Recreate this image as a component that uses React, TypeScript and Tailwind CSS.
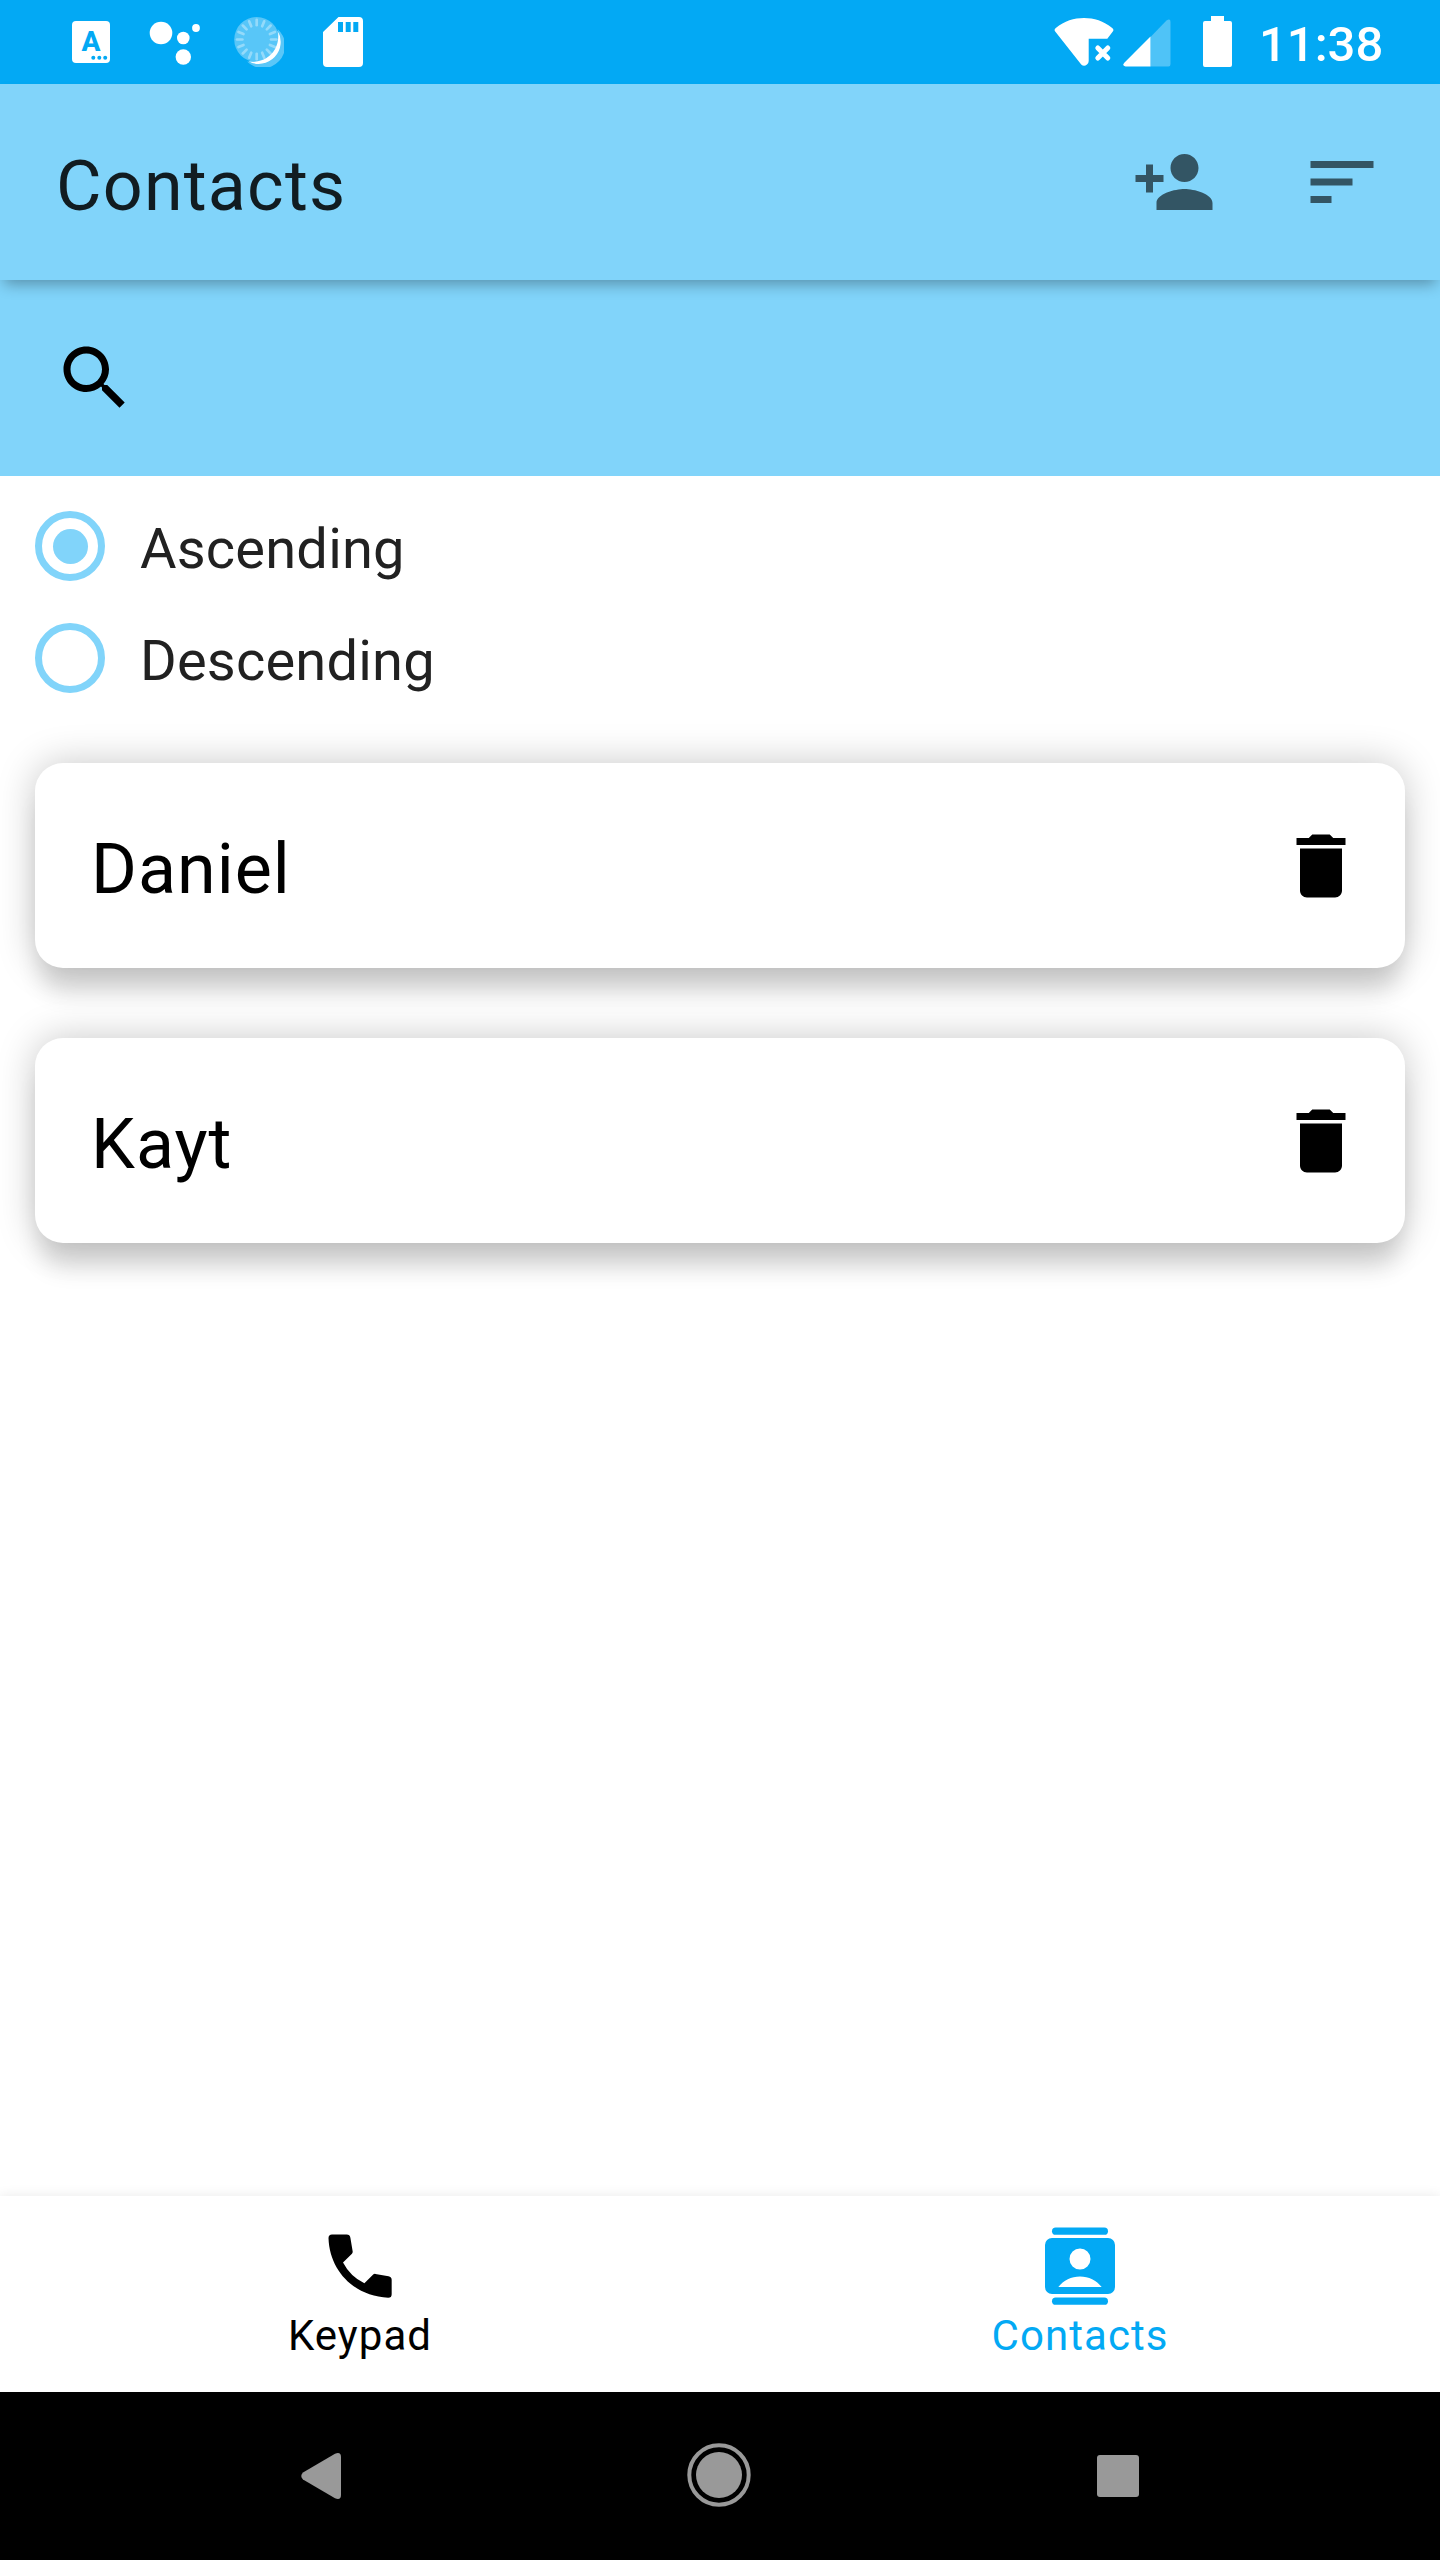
import React from "react";

type IconProps = { className?: string };

const MaterialIcon = ({ d, className = "" }: { d: string; className?: string }) => (
  <svg viewBox="0 0 24 24" className={`h-[84px] w-[84px] shrink-0 fill-current ${className}`}>
    <path d={d} />
  </svg>
);

const paths = {
  personAdd:
    "M15 12c2.21 0 4-1.79 4-4s-1.79-4-4-4-4 1.79-4 4 1.79 4 4 4zm-9-2V7H4v3H1v2h3v3h2v-3h3v-2H6zm9 4c-2.67 0-8 1.34-8 4v2h16v-2c0-2.66-5.33-4-8-4z",
  sort: "M3 18h6v-2H3v2zM3 6v2h18V6H3zm0 7h12v-2H3v2z",
  search:
    "M15.5 14h-.79l-.28-.27C15.41 12.59 16 11.11 16 9.5 16 5.91 13.09 3 9.5 3S3 5.91 3 9.5 5.91 16 9.5 16c1.61 0 3.09-.59 4.23-1.57l.27.28v.79l5 4.99L20.49 19l-4.99-5zm-6 0C7.01 14 5 11.99 5 9.5S7.01 5 9.5 5 14 7.01 14 9.5 11.99 14 9.5 14z",
  trash:
    "M6 19c0 1.1.9 2 2 2h8c1.1 0 2-.9 2-2V7H6v12zM19 4h-3.5l-1-1h-5l-1 1H5v2h14V4z",
  call: "M4 3h4.2q.9 0 1.05.9l.65 3.9q.07.4-.2.7L7.15 11q2 3.9 6.1 5.95l2.45-2.45q.3-.3.7-.25l3.75.65q.9.15.9 1.05v4.1q0 1-1 1C10.5 20.6 3.3 13.6 3 4q0-1 1-1z",
};

const KeyboardIcon = () => (
  <div className="relative h-[42px] w-[38px] rounded-[4px] bg-white text-[#03a9f4]">
    <span className="absolute inset-x-0 top-[7px] text-center text-[28px] leading-[28px] font-extrabold">A</span>
    <svg viewBox="0 0 38 42" className="absolute inset-0 fill-current">
      <circle cx="21.3" cy="36.7" r="2" />
      <circle cx="27.3" cy="36.7" r="2" />
      <circle cx="33.2" cy="36.7" r="2" />
    </svg>
  </div>
);

const AssistantIcon = ({ className }: IconProps) => (
  <svg viewBox="0 0 52 44" className={`h-[44px] w-[52px] fill-white ${className}`}>
    <circle cx="12" cy="12" r="11.3" />
    <circle cx="34.3" cy="17" r="6.3" />
    <circle cx="47" cy="7" r="3.9" />
    <circle cx="34.3" cy="36" r="7.7" />
  </svg>
);

const SyncIcon = ({ className }: IconProps) => (
  <svg viewBox="0 0 50 50" className={`h-[50px] w-[50px] ${className}`}>
    <path d="M43.5 12A22.3 22.3 0 1 1 13 44.5A24.5 24.5 0 0 0 43.5 12z" fill="#fff" fillOpacity=".35" />
    <circle cx="22.7" cy="22.5" r="22.5" fill="#fff" fillOpacity=".34" />
    <path d="M43.5 13.6A21.9 21.9 0 0 1 14.3 44.2A25 25 0 0 0 43.5 13.6z" fill="#fff" />
    {Array.from({ length: 16 }, (_, i) => (
      <path
        key={i}
        d="M22.7 2.8v5.4"
        stroke="#fff"
        strokeOpacity=".36"
        strokeWidth="2.7"
        strokeLinecap="round"
        transform={`rotate(${i * 22.5} 22.7 22.5)`}
      />
    ))}
  </svg>
);

const SdCardIcon = ({ className }: IconProps) => (
  <svg viewBox="0 0 40 50" className={`h-[50px] w-[40px] ${className}`}>
    <path
      fill="#fff"
      fillRule="evenodd"
      d="M15.5 0H36a4 4 0 0 1 4 4v42a4 4 0 0 1-4 4H4a4 4 0 0 1-4-4V15zM15 5v10h5V5zM22.7 5v10h5V5zM30.3 5v10h5V5z"
    />
  </svg>
);

const WifiOffIcon = () => (
  <svg viewBox="0 0 60 50" className="h-[50px] w-[60px]">
    <path
      fill="#fff"
      d="M1.2 14.5Q-.3 12.5 1.8 10.9C10.5 4 20 1 30 1s19.5 3 28.2 9.9Q60.3 12.5 58.8 14.5L53.3 21.7H34.7V44Q34.7 46 33 47.6Q30 50 27.2 47.6z"
    />
    <path d="M43.8 31l10 10m0-10l-10 10" stroke="#fff" strokeWidth="5" strokeLinecap="round" />
  </svg>
);

const SignalIcon = ({ className }: IconProps) => (
  <svg viewBox="0 0 48 48" className={`h-[48px] w-[48px] fill-white ${className}`}>
    <path d="M27.5 18L43.5 1.5Q47.5-1 47.5 3V45Q47.5 47.5 45.5 47.5H27.5z" fillOpacity=".3" />
    <path d="M27.5 17.5V47.5H2.5Q-1.3 46.8 1.3 43.7z" />
  </svg>
);

const BatteryIcon = ({ className }: IconProps) => (
  <svg viewBox="0 0 29 51" className={`h-[51px] w-[29px] fill-white ${className}`}>
    <path d="M8 0h13v5h6a2 2 0 0 1 2 2v42a2 2 0 0 1-2 2H2a2 2 0 0 1-2-2V7a2 2 0 0 1 2-2h6z" />
  </svg>
);

const ContactsIcon = () => (
  <svg viewBox="0 0 24 24" className="h-[84px] w-[84px] fill-current">
    <rect x="4" y="1" width="16" height="2.1" rx="1.05" />
    <rect x="4" y="21" width="16" height="2.1" rx="1.05" />
    <path
      fillRule="evenodd"
      d="M4 4h16a2 2 0 0 1 2 2v12a2 2 0 0 1-2 2H4a2 2 0 0 1-2-2V6a2 2 0 0 1 2-2zM12 7a3 3 0 1 0 0 6a3 3 0 1 0 0-6zM5.8 18h12.4C16.7 16.1 14.5 15 12 15s-4.7 1.1-6.2 3z"
    />
  </svg>
);

const StatusBar = () => (
  <div className="flex h-[84px] items-start bg-[#03a9f4] text-white">
    <div className="flex items-start pl-[72px] pt-[17px]">
      <div className="pt-1">
        <KeyboardIcon />
      </div>
      <AssistantIcon className="mt-[4px] ml-[39px]" />
      <SyncIcon className="ml-[33px]" />
      <SdCardIcon className="ml-[39px]" />
    </div>
    <div className="ml-auto flex items-start pt-[17px] pr-[54px]">
      <WifiOffIcon />
      <SignalIcon className="mt-[2px] ml-[9px]" />
      <BatteryIcon className="-mt-[1px] ml-[32px]" />
      <span className="mt-[-1px] ml-[27px] w-[127px] text-[49px] leading-[57px] font-medium whitespace-nowrap">11:38</span>
    </div>
  </div>
);

const Radio = ({ label, checked }: { label: string; checked?: boolean }) => (
  <div className="flex h-[112px] items-center gap-[35px]">
    <div className="flex h-[70px] w-[70px] items-center justify-center rounded-full border-[7px] border-[#81d4fa]">
      {checked && <div className="h-[35px] w-[35px] rounded-full bg-[#81d4fa]" />}
    </div>
    <span className="pt-[6px] text-[56px] leading-[64px] tracking-[0.2px] text-[#212121]">{label}</span>
  </div>
);

const ContactCard = ({ name }: { name: string }) => (
  <div className="flex h-[205px] items-center justify-between rounded-[28px] bg-white pr-[42px] pl-[56px] shadow-[0_0_38px_rgba(0,0,0,0.22),0_30px_24px_-6px_rgba(0,0,0,0.14)]">
    <span className="pt-[7px] text-[70px] leading-[84px] tracking-[1px] text-black">{name}</span>
    <MaterialIcon d={paths.trash} />
  </div>
);

export default function App() {
  return (
    <div className="flex h-[2560px] w-[1440px] flex-col overflow-hidden bg-white font-[Roboto,sans-serif]">
      <StatusBar />
      <header className="relative z-10 flex h-[196px] items-center bg-[#81d4fa] pr-[56px] pl-[56px] shadow-[0_8px_14px_-4px_rgba(0,0,0,0.32)]">
        <h1 className="flex-1 pt-2 text-[70px] leading-[84px] tracking-[1.2px] text-black/87">Contacts</h1>
        <div className="flex gap-[84px] text-black/60">
          <MaterialIcon d={paths.personAdd} />
          <MaterialIcon d={paths.sort} />
        </div>
      </header>
      <div className="flex h-[196px] items-center bg-[#81d4fa] pl-[53px] text-black">
        <MaterialIcon d={paths.search} />
      </div>
      <main className="flex flex-1 flex-col px-[35px] pt-[14px]">
        <Radio label="Ascending" checked />
        <Radio label="Descending" />
        <div className="mt-[49px] flex flex-col gap-[70px]">
          <ContactCard name="Daniel" />
          <ContactCard name="Kayt" />
        </div>
      </main>
      <nav className="flex h-[196px] bg-white text-[42px] leading-[50px] tracking-[1.05px] shadow-[0_0_12px_rgba(0,0,0,0.09)]">
        <div className="flex flex-1 flex-col items-center pt-[27.5px] text-black">
          <MaterialIcon d={paths.call} />
          <span className="mt-[3px]">Keypad</span>
        </div>
        <div className="flex flex-1 flex-col items-center pt-[27.5px] text-[#03a9f4]">
          <ContactsIcon />
          <span className="mt-[3px]">Contacts</span>
        </div>
      </nav>
      <div className="flex h-[168px] items-center bg-black pl-[301px] text-[#999]">
        <svg viewBox="0 0 40 46" className="h-[46px] w-[40px] fill-current">
          <path d="M34 .7Q40-1.5 40 4V42Q40 47.5 34 45.3L2 26.5Q-1.5 23 2 19.5z" />
        </svg>
        <svg viewBox="0 0 64 64" className="ml-[346px] mt-[-2px] h-[64px] w-[64px] fill-current">
          <circle cx="32" cy="32" r="23" />
          <circle cx="32" cy="32" r="29.7" fill="none" stroke="currentColor" strokeWidth="4" />
        </svg>
        <div className="ml-[346px] h-[42px] w-[42px] rounded-[3px] bg-current" />
      </div>
    </div>
  );
}
